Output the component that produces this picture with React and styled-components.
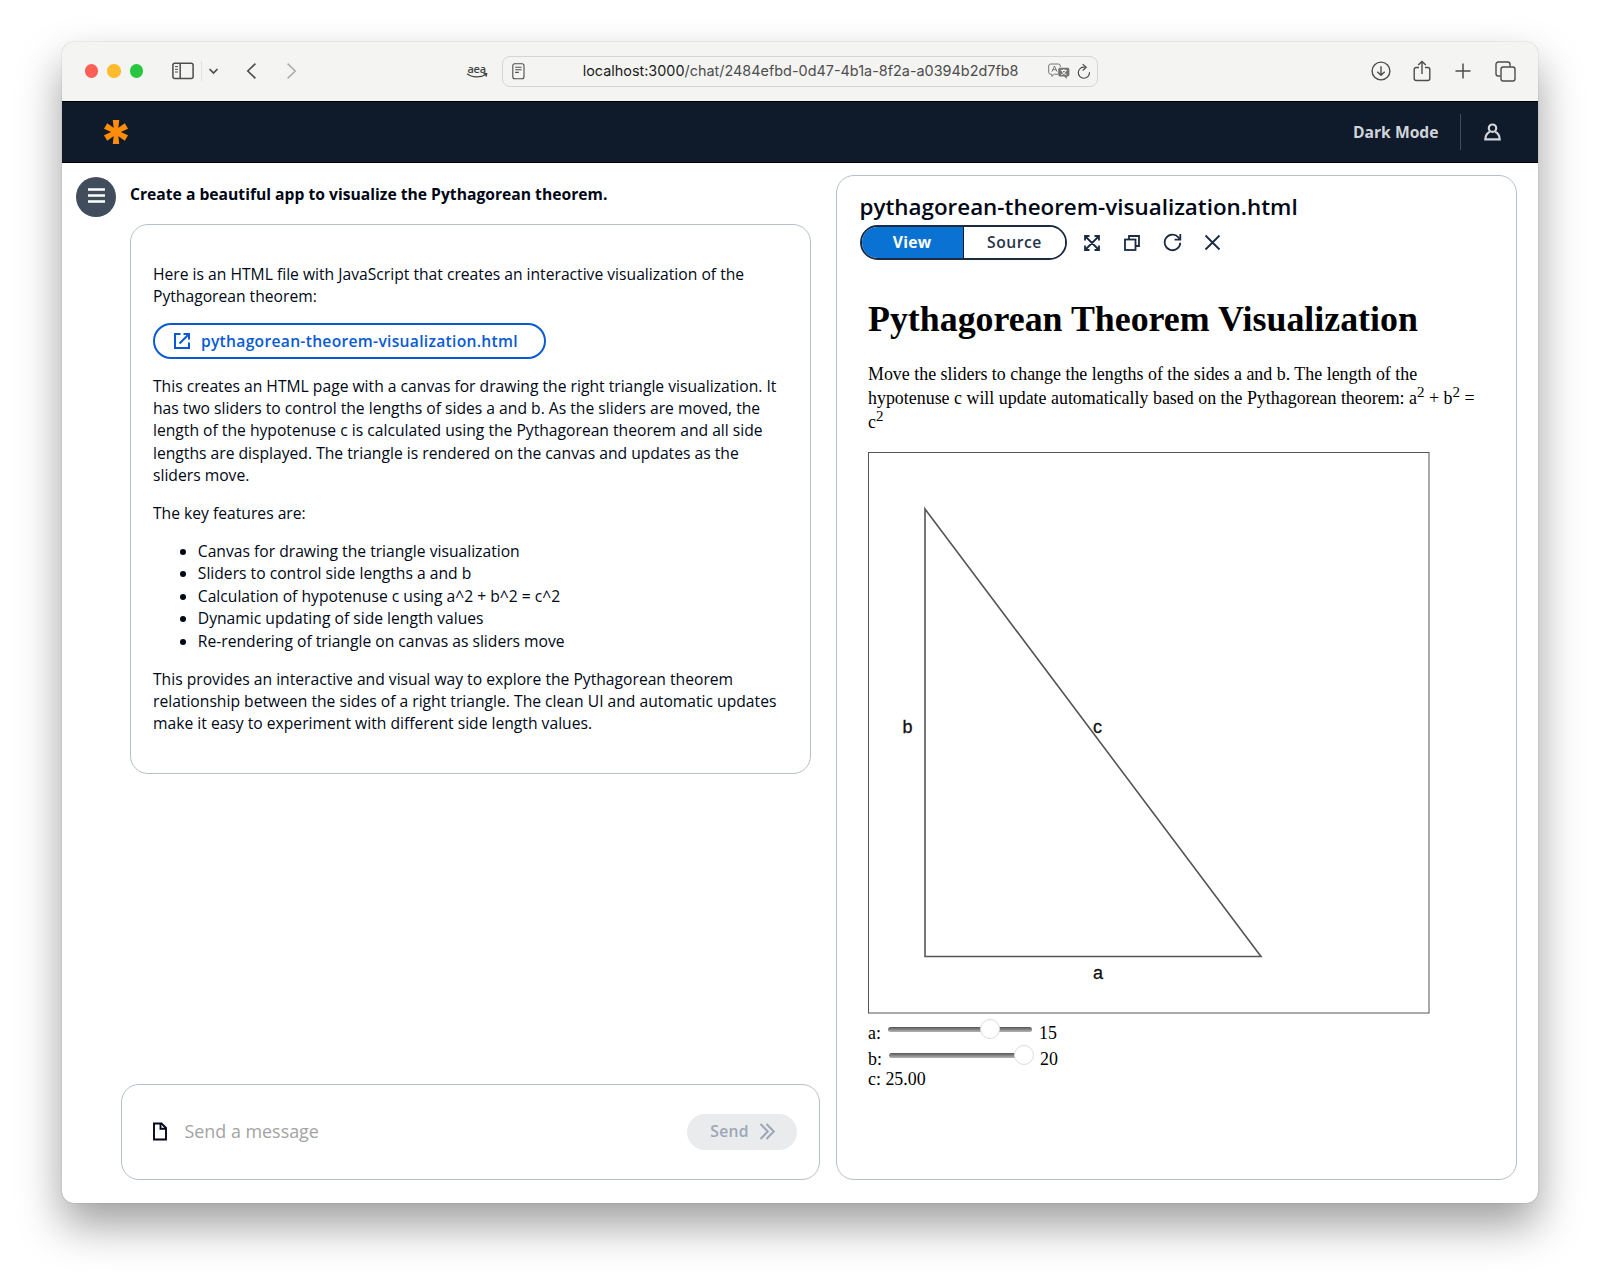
import React from "react";
import styled, { createGlobalStyle } from "styled-components";

const Global = createGlobalStyle`
  * { box-sizing: border-box; }
  body { margin: 0; background: #fff; overflow: hidden; }
  button { font: inherit; }
`;

const sans = `"Open Sans", "Noto Sans", sans-serif`;
const serif = `"Liberation Serif", "Times New Roman", serif`;

const Desktop = styled.div`
  width: 1600px;
  height: 1285px;
  padding: 42px 62px 82px;
  background: #fff;
`;
const Window = styled.main`
  width: 1476px;
  height: 1161px;
  display: flex;
  flex-direction: column;
  border-radius: 12px;
  overflow: hidden;
  background: #fff;
  font-family: ${sans};
  font-size: 15.67px;
  line-height: 22.4px;
  color: #000716;
  box-shadow: 0 0 1px rgba(0, 0, 0, 0.45), 0 22px 44px rgba(0, 0, 0, 0.38);
`;

const Toolbar = styled.header`
  height: 59px;
  flex: none;
  display: flex;
  align-items: center;
  background: #f4f4f2;
  color: #4c4c4c;
  padding: 0 22px 1px 23px;
  svg { flex: none; display: block; }
`;
const Lights = styled.div`
  display: flex;
  gap: 9px;
  margin-right: 29px;
`;
const Light = styled.span`
  width: 13.4px;
  height: 13.4px;
  border-radius: 50%;
  background: ${(p) => p.$color};
`;
const Separator = styled.span`
  width: 1px;
  height: 20px;
  background: #e2e2e0;
  margin: 0 7px;
`;
const Forward = styled.span`
  color: #adadad;
`;
const Gap = styled.span`
  flex: none;
  width: ${(p) => p.$w}px;
`;
const Extension = styled.div`
  width: 22px;
  display: flex;
  flex-direction: column;
  align-items: center;
  font: 600 11px/9px ${sans};
  letter-spacing: -0.2px;
  color: #444;
`;
const Address = styled.div`
  width: 596px;
  height: 31px;
  display: flex;
  align-items: center;
  border: 1px solid #d6d6d4;
  border-radius: 8px;
  padding: 0 6px 0 9px;
  margin-left: 14px;
`;
const Url = styled.span`
  flex: 1;
  padding-left: 58px;
  white-space: nowrap;
  font: 14.41px/20px Inter, sans-serif;
  color: #4d4d4d;
  b { font-weight: 400; color: #1c1c1c; }
`;
const ToolbarActions = styled.div`
  margin-left: auto;
  display: flex;
  align-items: center;
`;

const AppBar = styled.nav`
  height: 62px;
  flex: none;
  display: flex;
  align-items: center;
  background: #0f1b2a;
  border-top: 1px solid #000;
  border-bottom: 1px solid #000;
  padding: 0 37px 0 42px;
  color: #d1d5db;
`;
const ModeLink = styled.span`
  margin-left: auto;
  font-weight: 700;
`;
const BarDivider = styled.span`
  width: 1px;
  height: 36px;
  margin: 0 23px 0 21.5px;
  background: #414d5c;
`;

const Body = styled.div`
  flex: 1;
  display: flex;
  padding: 12px 21px 23px 14px;
`;
const MenuButton = styled.button`
  width: 40px;
  height: 40px;
  flex: none;
  border: 0;
  border-radius: 50%;
  margin-top: 2px;
  padding: 0 0 4px;
  display: flex;
  align-items: center;
  justify-content: center;
  background: #414d5c;
`;
const ChatColumn = styled.section`
  width: 699px;
  margin-left: 5px;
  display: flex;
  flex-direction: column;
  justify-content: space-between;
`;
const Thread = styled.div`
  padding: 8px 9px 0;
`;
const Prompt = styled.h2`
  margin: 0 0 19px;
  font-size: 15.67px;
  line-height: 22px;
  font-weight: 700;
  white-space: nowrap;
`;
const Panel = styled.div`
  border: 1px solid #b6bec9;
  border-radius: 18px;
  background: #fff;
`;
const Answer = styled(Panel)`
  height: 550px;
  padding: 38px 22px;
  p, ul { margin: 0 0 15.5px; white-space: nowrap; }
  ul { padding-left: 44.8px; }
`;
const FileLink = styled.button`
  height: 35.3px;
  width: 393px;
  display: flex;
  align-items: center;
  gap: 9.5px;
  margin: 0 0 16px 0.4px;
  padding: 0 0 0 18px;
  border: 2px solid #0a5bd3;
  border-radius: 18px;
  background: #fff;
  color: #0a5bd3;
  font-weight: 600;
  letter-spacing: 0.28px;
  white-space: nowrap;
`;
const Composer = styled(Panel)`
  height: 96px;
  display: flex;
  align-items: center;
  padding: 0 22px 1px 30px;
`;
const Placeholder = styled.span`
  margin-left: 16.5px;
  font-size: 17.9px;
  color: #a3a3a3;
`;
const SendButton = styled.button`
  margin-left: auto;
  width: 110px;
  height: 36px;
  border: 0;
  border-radius: 18px;
  display: flex;
  align-items: center;
  justify-content: center;
  gap: 10px;
  padding: 0 0 0 2px;
  background: #e9ebed;
  color: #9ba7b6;
  font-weight: 600;
  letter-spacing: 0.28px;
`;

const Preview = styled(Panel)`
  width: 681px;
  margin-left: auto;
  padding: 19px 22px 0 22.5px;
`;
const FileName = styled.h1`
  margin: 0;
  font-size: 22.4px;
  line-height: 24px;
  font-weight: 600;
  white-space: nowrap;
`;
const Actions = styled.div`
  display: flex;
  align-items: center;
  margin-top: 6px;
  color: #1b2b41;
  svg { display: block; flex: none; }
`;
const Segments = styled.div`
  display: flex;
  width: 207.5px;
  height: 35px;
  border: 2px solid #1b2b41;
  border-radius: 18px;
  overflow: hidden;
`;
const Segment = styled.button`
  flex: 1;
  border: 0;
  padding: 0;
  font-weight: ${(p) => (p.$active ? 700 : 600)};
  letter-spacing: ${(p) => (p.$active ? 0.28 : 0.5)}px;
  background: ${(p) => (p.$active ? "#0972d3" : "#fff")};
  color: ${(p) => (p.$active ? "#fff" : "#273549")};
  & + & { border-left: 1.5px solid #0f1b2a; }
`;

const Doc = styled.article`
  padding: 38px 0 0 8.5px;
  font-family: ${serif};
  font-size: 17.92px;
  color: #000;
  white-space: nowrap;
`;
const DocTitle = styled.h1`
  margin: 0 0 21.5px;
  font-size: 35.86px;
  line-height: 42px;
`;
const DocText = styled.p`
  margin: 0 0 17px;
  line-height: 24.4px;
  sup { font-size: 15px; line-height: 0; }
`;
const Canvas = styled.svg`
  display: block;
`;
const SliderRow = styled.label`
  display: flex;
  height: ${(p) => p.$h}px;
  line-height: 22px;
  align-items: flex-end;
`;
const Track = styled.span`
  position: relative;
  width: 144px;
  height: 5px;
  align-self: flex-start;
  margin: ${(p) => p.$top}px 7px 0;
  border-radius: 3px;
  background: linear-gradient(#555, #b5b5b5);
`;
const Thumb = styled.span`
  position: absolute;
  top: -8px;
  width: 20px;
  height: 20px;
  border-radius: 50%;
  border: 1px solid #dcdcdc;
  background: #fff;
`;

const Stroke = ({ w, h = w, sw = 1.5, children }) => (
  <svg width={w} height={h} viewBox={`0 0 ${w} ${h}`} fill="none" stroke="currentColor" strokeWidth={sw}>
    {children}
  </svg>
);

function BrowserBar() {
  return (
    <Toolbar>
      <Lights>
        <Light $color="#fd5f57" />
        <Light $color="#febb2e" />
        <Light $color="#28c740" />
      </Lights>
      <Stroke w={22} h={18}>
        <rect x="0.9" y="1.2" width="20.2" height="15.2" rx="2" />
        <path d="M8.2 1.2v15.2" />
        <path d="M3 4.6h3M3 7.3h3M3 10h3" strokeWidth="1" />
      </Stroke>
      <Separator />
      <Stroke w={9} h={7} sw={1.7}>
        <path d="M1 1.5l3.500 3.500L8 1.500" strokeLinecap="round" />
      </Stroke>
      <Gap $w={28} />
      <Stroke w={11} h={18} sw={1.6}>
        <path d="M9.4 1.700L1.800 9l7.600 7.300" />
      </Stroke>
      <Gap $w={29} />
      <Forward>
        <Stroke w={11} h={18} sw={1.6}>
          <path d="M1.600 1.700L9.200 9l-7.600 7.300" />
        </Stroke>
      </Forward>
      <Gap $w={168.5} />
      <Extension>
        aea
        <Stroke w={22} h={6} sw={1.3}>
          <path d="M1 .8c5 4 14 4 19 .4M17.500.7h3.200l-.6 3" />
        </Stroke>
      </Extension>
      <Address>
        <Stroke w={13} h={17} sw={1.1}>
          <rect x=".8" y=".8" width="11.200" height="15" rx="2" />
          <path d="M3.200 4.200h6.400M3.200 6.800h6.400M3.200 9.400h3.600" />
        </Stroke>
        <Url>
          <b>localhost:3000</b>/chat/2484efbd-0d47-4b1a-8f2a-a0394b2d7fb8
        </Url>
        <svg width="22" height="17" viewBox="0 0 22 17" fill="none" stroke="#777" strokeWidth="1">
          <path d="M10 11.2H6.4L3.8 13.3v-2.1H2.7A2 2 0 0 1 .7 9.2V3A2 2 0 0 1 2.7 1h7.6A2 2 0 0 1 12.3 3v1" />
          <path d="M4 8.600L6.500 3l2.500 5.600M4.900 6.700h3.200" />
          <path d="M12 4.700h7.600a1.800 1.800 0 0 1 1.800 1.800v5.200a1.800 1.800 0 0 1-1.800 1.800h-.8v2.500l-2.600-2.500H12a1.800 1.800 0 0 1-1.800-1.800V6.500A1.800 1.800 0 0 1 12 4.700z" fill="#737373" stroke="none" />
          <path d="M12.800 7.400h6M15.800 6v1.400M14 7.600c.5 2 2.200 3.500 4.500 4.100M17.700 7.600c-.5 2-2.200 3.500-4.500 4.100" stroke="#fff" />
        </svg>
        <Gap $w={7} />
        <Stroke w={14} h={17} sw={1.2}>
          <path d="M7.500 4.100A5.600 5.600 0 1 0 12.500 9.600" strokeLinecap="round" />
          <path d="M6 1.400l3.200 2.800L6 7.200" strokeLinecap="round" />
        </Stroke>
      </Address>
      <ToolbarActions>
        <Stroke w={20} sw={1.4}>
          <circle cx="10" cy="10" r="8.900" />
          <path d="M10 5.300v9M6.300 10.700L10 14.300l3.700-3.600" />
        </Stroke>
        <Gap $w={22} />
        <Stroke w={18} h={22} sw={1.4}>
          <path d="M6 7.500H3.200a2 2 0 0 0-2 2v9a2 2 0 0 0 2 2h11.600a2 2 0 0 0 2-2v-9a2 2 0 0 0-2-2H12" />
          <path d="M9 14V1.500M5.200 5L9 1.400 12.800 5" />
        </Stroke>
        <Gap $w={24} />
        <Stroke w={16}>
          <path d="M8 .5v15M.5 8h15" />
        </Stroke>
        <Gap $w={24} />
        <Stroke w={21} sw={1.4}>
          <path d="M5.500 15H3.200A2.200 2.200 0 0 1 1 12.800V3.200A2.200 2.200 0 0 1 3.200 1h9.600A2.200 2.200 0 0 1 15 3.200v2.300" />
          <rect x="6" y="6" width="14" height="14" rx="2.200" />
        </Stroke>
      </ToolbarActions>
    </Toolbar>
  );
}

function TopNav() {
  return (
    <AppBar>
      <svg width="24" height="24" viewBox="-12 -12 24 24" fill="#ff8c0a">
        {[0, 60, 120, 180, 240, 300].map((a) => (
          <path key={a} transform={`rotate(${a})`} d="M-1.900 0.500L-3.200 -12h6.400L1.900 0.500z" />
        ))}
      </svg>
      <ModeLink>Dark Mode</ModeLink>
      <BarDivider />
      <Stroke w={17} h={18} sw={2.2}>
        <circle cx="8.500" cy="5.200" r="3.700" />
        <path d="M5.800 8.800C3.300 10 1.500 12.500 1.300 16.300h14.400c-.2-3.800-2-6.300-4.500-7.500" />
      </Stroke>
    </AppBar>
  );
}

function Chat() {
  return (
    <ChatColumn>
      <Thread>
        <Prompt>Create a beautiful app to visualize the Pythagorean theorem.</Prompt>
        <Answer>
          <p>
            Here is an HTML file with JavaScript that creates an interactive visualization of the
            <br />
            Pythagorean theorem:
          </p>
          <FileLink>
            <Stroke w={18} sw={2}>
              <path d="M7.500 2H2v14h14v-5.500" />
              <path d="M10.500 2H16v5.500M16 2L6.500 11.500" />
            </Stroke>
            pythagorean-theorem-visualization.html
          </FileLink>
          <p>
            This creates an HTML page with a canvas for drawing the right triangle visualization. It
            <br />
            has two sliders to control the lengths of sides a and b. As the sliders are moved, the
            <br />
            length of the hypotenuse c is calculated using the Pythagorean theorem and all side
            <br />
            lengths are displayed. The triangle is rendered on the canvas and updates as the
            <br />
            sliders move.
          </p>
          <p>The key features are:</p>
          <ul>
            <li>Canvas for drawing the triangle visualization</li>
            <li>Sliders to control side lengths a and b</li>
            <li>Calculation of hypotenuse c using a^2 + b^2 = c^2</li>
            <li>Dynamic updating of side length values</li>
            <li>Re-rendering of triangle on canvas as sliders move</li>
          </ul>
          <p>
            This provides an interactive and visual way to explore the Pythagorean theorem
            <br />
            relationship between the sides of a right triangle. The clean UI and automatic updates
            <br />
            make it easy to experiment with different side length values.
          </p>
        </Answer>
      </Thread>
      <Composer>
        <Stroke w={16} h={19} sw={1.9}>
          <path d="M2 1.500h7.500L14 6v11.500H2z" />
          <path d="M8.500 1.500v5.300H14" />
        </Stroke>
        <Placeholder>Send a message</Placeholder>
        <SendButton>
          Send
          <Stroke w={17} sw={2}>
            <path d="M1.500 1l7.300 7.500L1.500 16M7.500 1l7.300 7.500L7.500 16" />
          </Stroke>
        </SendButton>
      </Composer>
    </ChatColumn>
  );
}

function Slider({ label, value, left, h, top }) {
  return (
    <SliderRow $h={h}>
      {label}:
      <Track $top={top}>
        <Thumb style={{ left }} />
      </Track>
      {value}
    </SliderRow>
  );
}

function FilePreview() {
  return (
    <Preview>
      <FileName>pythagorean-theorem-visualization.html</FileName>
      <Actions>
        <Segments>
          <Segment $active>View</Segment>
          <Segment>Source</Segment>
        </Segments>
        <Gap $w={16} />
        <Stroke w={18} sw={1.8}>
          <path d="M6.500 2H2v4.500M11.500 2H16v4.500M6.500 16H2v-4.500M11.500 16H16v-4.500M2 2l14 14M16 2L2 16" />
        </Stroke>
        <Gap $w={22} />
        <Stroke w={18} sw={1.8}>
          <rect x="2" y="5.500" width="10.500" height="10.500" />
          <path d="M6 5.500V2h10v10h-3.500" />
        </Stroke>
        <Gap $w={22} />
        <Stroke w={19} sw={1.8}>
          <path d="M17.300 9.800A7.800 7.800 0 1 1 15.400 4.300L17.300 6.500" />
          <path d="M17.300 1v5.700h-5.700" />
        </Stroke>
        <Gap $w={22} />
        <Stroke w={17} sw={1.8}>
          <path d="M1.500 1.500l14 14M15.500 1.500l-14 14" />
        </Stroke>
      </Actions>
      <Doc>
        <DocTitle>Pythagorean Theorem Visualization</DocTitle>
        <DocText>
          Move the sliders to change the lengths of the sides a and b. The length of the
          <br />
          hypotenuse c will update automatically based on the Pythagorean theorem: a<sup>2</sup> + b<sup>2</sup> =
          <br />c<sup>2</sup>
        </DocText>
        <Canvas width="562" height="562" viewBox="0 0 562 562">
          <rect x=".5" y=".5" width="560.500" height="560.500" fill="none" stroke="#555" />
          <path d="M57 57V504.500H393z" fill="none" stroke="#555" strokeWidth="1.600" />
          <g fontFamily="Liberation Sans, Arial, sans-serif" fontSize="18" fill="#111" stroke="#111" strokeWidth=".3">
            <text x="34.500" y="281">b</text>
            <text x="225" y="281">c</text>
            <text x="225" y="527">a</text>
          </g>
        </Canvas>
        <Slider label="a" value={15} left={92} h={30} top={13} />
        <Slider label="b" value={20} left={125} h={26} top={9} />
        <SliderRow $h={20}>c: 25.00</SliderRow>
      </Doc>
    </Preview>
  );
}

export default function App() {
  return (
    <Desktop>
      <Global />
      <Window>
        <BrowserBar />
        <TopNav />
        <Body>
          <MenuButton aria-label="Menu">
            <svg width="17" height="15" viewBox="0 0 17 15" stroke="#fff" strokeWidth="2.400">
              <path d="M0 1.500h17M0 7.500h17M0 13.500h17" />
            </svg>
          </MenuButton>
          <Chat />
          <FilePreview />
        </Body>
      </Window>
    </Desktop>
  );
}
